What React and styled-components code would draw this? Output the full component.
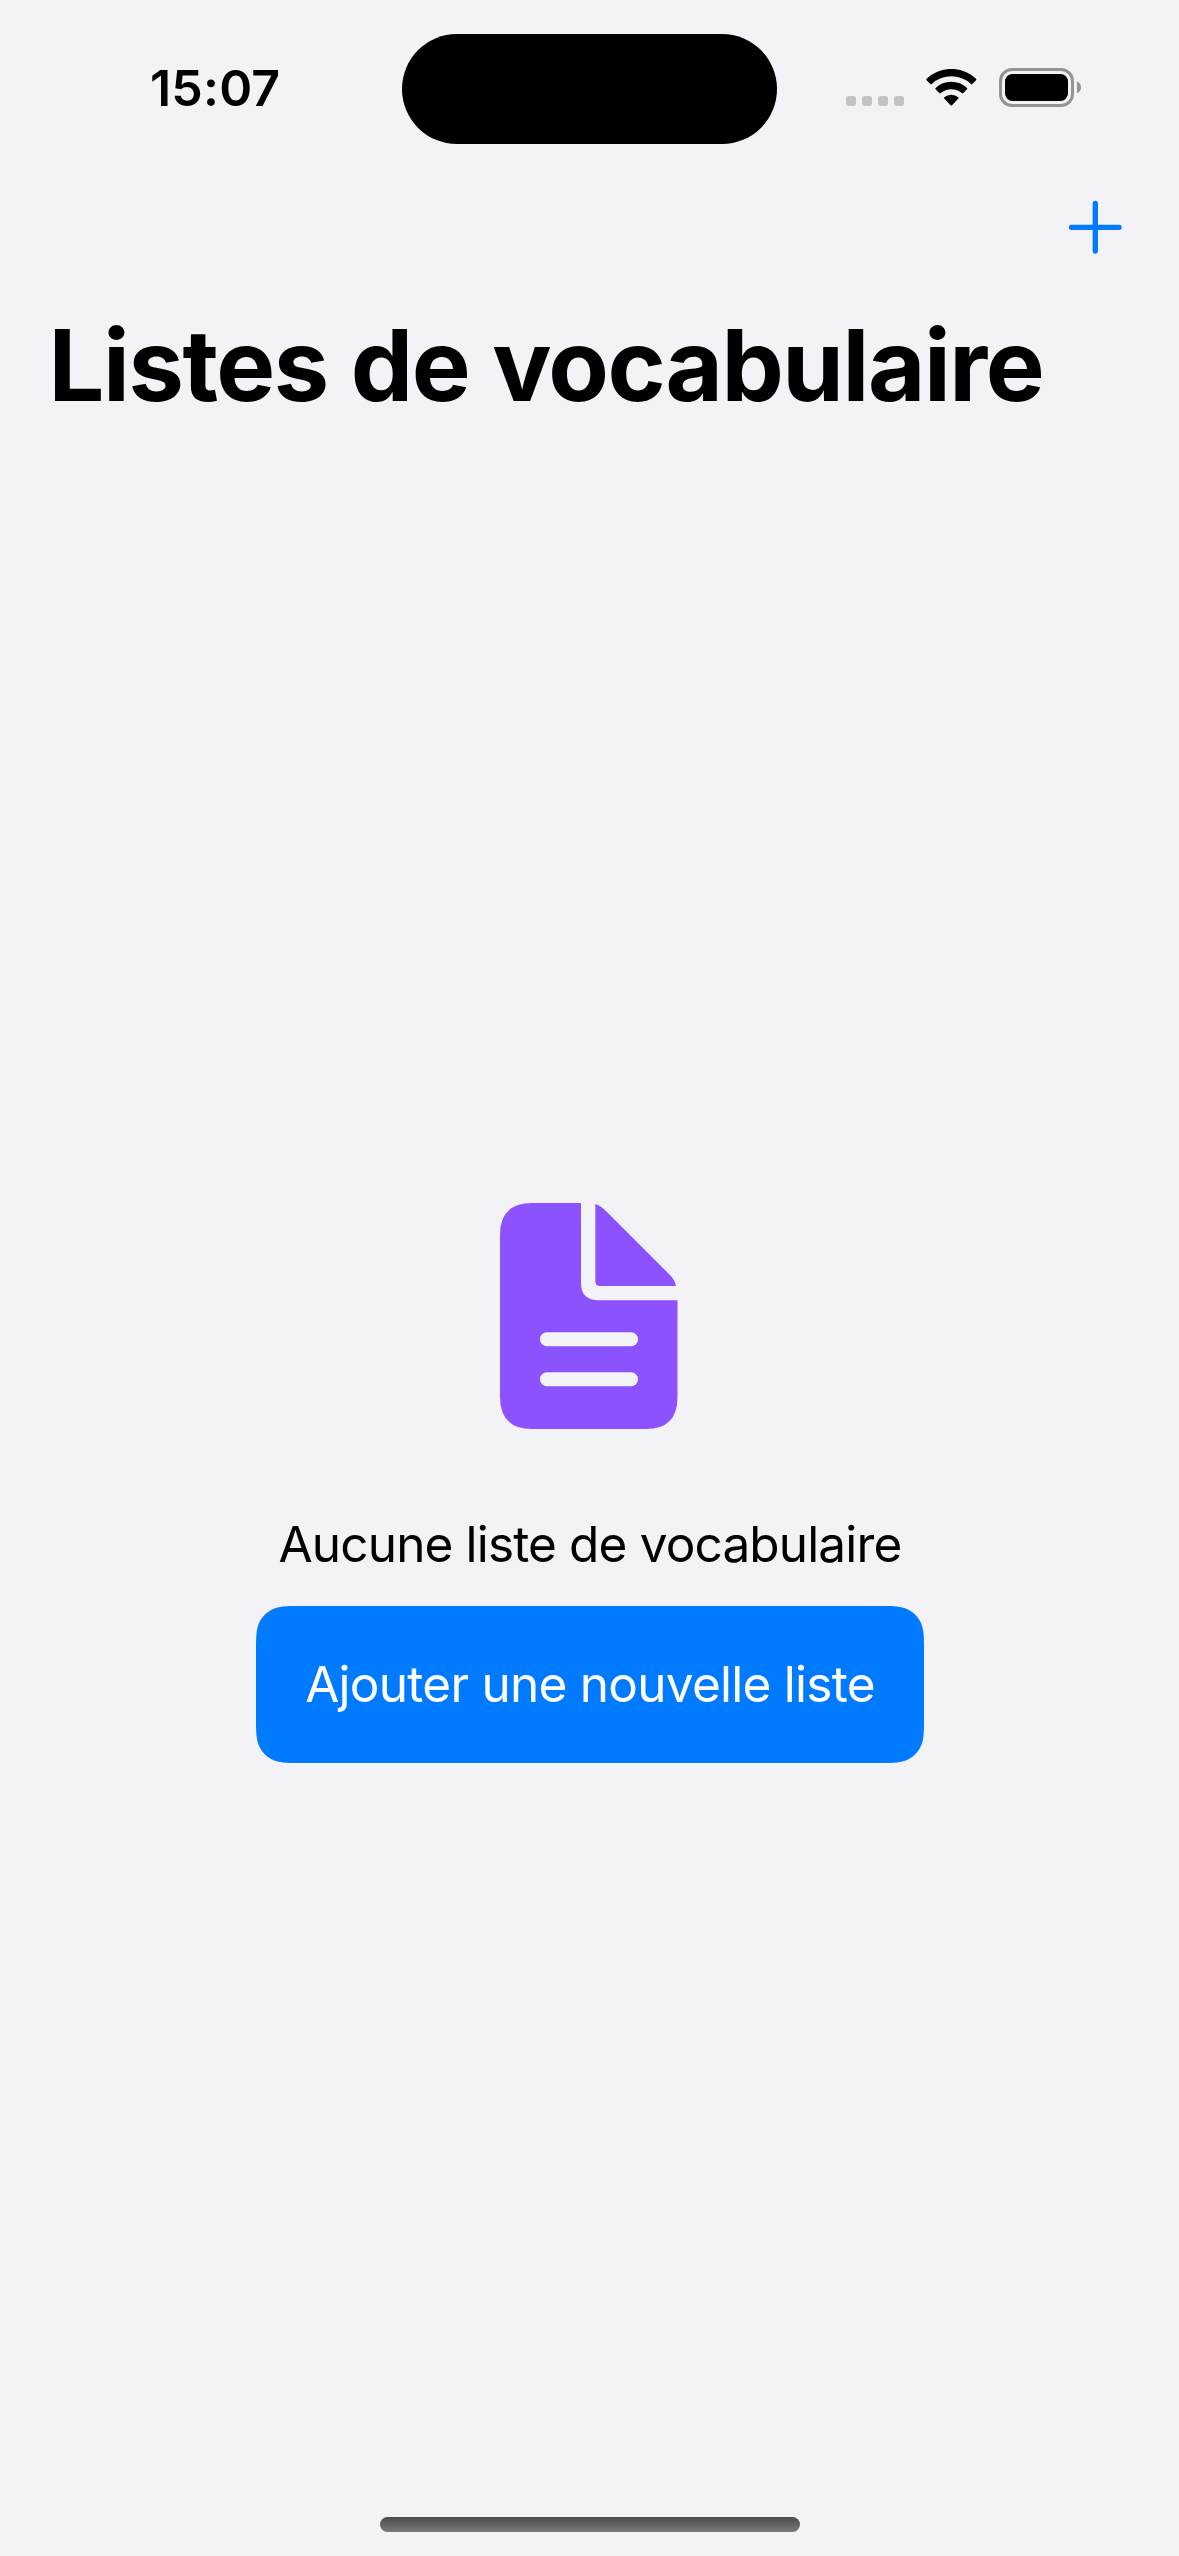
import React from "react";
import styled, { createGlobalStyle } from "styled-components";

const GlobalStyle = createGlobalStyle`
  *, *::before, *::after { box-sizing: border-box; }
  html, body { margin: 0; padding: 0; background: #f2f2f7; }
`;

// Continuous-curvature corners, as iOS draws its rounded rectangles.
const continuousCorners = (w, h, r) => {
  const a = 1.528665 * r, b = 1.08849 * r, c = 0.86841 * r;
  const d = 0.63149 * r, e = 0.07491 * r, f = 0.37282 * r, g = 0.16906 * r;
  return `M${a} 0H${w - a}C${w - b} 0 ${w - c} 0 ${w - d} ${e}C${w - f} ${g} ${w - g} ${f} ${w - e} ${d}C${w} ${c} ${w} ${b} ${w} ${a}V${h - a}C${w} ${h - b} ${w} ${h - c} ${w - e} ${h - d}C${w - g} ${h - f} ${w - f} ${h - g} ${w - d} ${h - e}C${w - c} ${h} ${w - b} ${h} ${w - a} ${h}H${a}C${b} ${h} ${c} ${h} ${d} ${h - e}C${f} ${h - g} ${g} ${h - f} ${e} ${h - d}C0 ${h - c} 0 ${h - b} 0 ${h - a}V${a}C0 ${b} 0 ${c} ${e} ${d}C${g} ${f} ${f} ${g} ${d} ${e}C${c} 0 ${b} 0 ${a} 0Z`;
};

const Screen = styled.div`
  width: 1179px;
  height: 2556px;
  display: flex;
  flex-direction: column;
  overflow: hidden;
  background: #f2f2f7;
  color: #000;
  font-family: Inter, "Liberation Sans", sans-serif;
`;

const StatusBar = styled.header`
  height: 177px;
  flex: none;
  display: grid;
  grid-template-columns: 402px 375px 402px;
  padding-top: 34px;
`;

const Clock = styled.time`
  height: 110px;
  padding-left: 150px;
  font-size: 50px;
  font-weight: 600;
  line-height: 108px;
  letter-spacing: 0.2px;
`;

const Island = styled.div`
  height: 110px;
  border-radius: 55px;
  background: #000;
`;

const Indicators = styled.div`
  height: 110px;
  padding-left: 69px;
  display: flex;
  align-items: flex-start;
`;

const Signal = styled.div`
  display: flex;
  gap: 6px;
  margin: 62px 22px 0 0;
`;

const SignalDot = styled.span`
  width: 10px;
  height: 10px;
  border-radius: 3px;
  background: #c3c2c7;
`;

const WifiIcon = styled.svg`
  width: 51px;
  height: 37px;
  margin: 35px 22px 0 0;
`;

const BatteryIcon = styled.svg`
  width: 83px;
  height: 39px;
  margin-top: 34px;
`;

const NavBar = styled.nav`
  height: 128px;
  flex: none;
  display: flex;
  justify-content: flex-end;
  padding: 23px 56px 0 0;
`;

const AddButton = styled.button`
  width: 55px;
  height: 55px;
  padding: 0;
  border: 0;
  background: none;
  color: #007aff;
`;

const PlusIcon = styled.svg`
  display: block;
  width: 55px;
  height: 55px;
`;

const Title = styled.h1`
  flex: none;
  margin: 0;
  padding-left: 48.5px;
  font-size: 99px;
  font-weight: 700;
  line-height: 120px;
  letter-spacing: -1.45px;
  word-spacing: 1px;
  white-space: nowrap;
`;

const EmptyState = styled.main`
  flex: 1;
  display: flex;
  flex-direction: column;
  align-items: center;
  padding: 778px 0 0 1px;
`;

const DocumentIcon = styled.svg`
  width: 178px;
  height: 226px;
  margin-right: 2px;
  color: #8c52ff;
`;

const Message = styled.p`
  margin: 85px 0 0;
  height: 61px;
  font-size: 49.5px;
  line-height: 61px;
  letter-spacing: -0.85px;
  white-space: nowrap;
`;

const PrimaryButton = styled.button`
  width: 668px;
  height: 157px;
  margin-top: 31px;
  padding: 0;
  border: 0;
  clip-path: path("${continuousCorners(668, 157, 30)}");
  background: #007aff;
  color: #fff;
  font: 400 49.5px/157px Inter, "Liberation Sans", sans-serif;
  letter-spacing: -0.74px;
  white-space: nowrap;
`;

const HomeArea = styled.footer`
  height: 39px;
  flex: none;
  display: flex;
  justify-content: center;
  padding-left: 1px;
`;

const HomeIndicator = styled.div`
  width: 420px;
  height: 15px;
  border-radius: 8px;
  background: linear-gradient(#4b4b4c, #7a7a7c);
`;

export default function App() {
  return (
    <Screen>
      <GlobalStyle />
      <StatusBar>
        <Clock>15:07</Clock>
        <Island />
        <Indicators>
          <Signal>
            <SignalDot />
            <SignalDot />
            <SignalDot />
            <SignalDot />
          </Signal>
          <WifiIcon viewBox="0 0 51 37">
            <path d="M.6 9.800Q11-.1 25.300-.1T50 9.800Q50.700 10.500 50 11.200L46.300 14.900Q45.600 15.600 44.900 14.900 36.500 7.300 25.300 7.300T5.700 14.900Q5 15.600 4.300 14.900L.6 11.200Q-.1 10.500.6 9.800Z" />
            <path d="M9.600 18.900Q16 12.700 25.300 12.700T41 18.900Q41.700 19.600 41 20.300L37.300 24.100Q36.600 24.800 35.900 24.100 31.500 20.200 25.300 20.200T14.700 24.100Q14 24.800 13.300 24.100L9.600 20.300Q8.900 19.600 9.600 18.900Z" />
            <path d="M18.300 28.200Q21.300 25.700 25.300 25.700T32.300 28.200Q33.100 28.900 32.400 29.600L26 36.200Q25.300 36.900 24.600 36.200L18.200 29.600Q17.500 28.900 18.300 28.200Z" />
          </WifiIcon>
          <BatteryIcon viewBox="0 0 83 39">
            <rect x="1.5" y="1.5" width="72" height="36" rx="11.5" fill="none" stroke="#949396" strokeWidth="3" />
            <rect x="6" y="6" width="63" height="27" rx="7.5" />
            <path d="M78 13.300Q82 15.300 82 19.300T78 25.300Z" fill="#949396" />
          </BatteryIcon>
        </Indicators>
      </StatusBar>
      <NavBar>
        <AddButton aria-label="Ajouter">
          <PlusIcon viewBox="0 0 55 55">
            <path d="M3.500 27.300H51.100M27.300 3.500V51.100" fill="none" stroke="currentColor" strokeWidth="5.3" strokeLinecap="round" />
          </PlusIcon>
        </AddButton>
      </NavBar>
      <Title>Listes de vocabulaire</Title>
      <EmptyState>
        <DocumentIcon viewBox="0 0 178 226" fill="currentColor">
          <path
            fillRule="evenodd"
            d="M32 0H81V80Q81 97.300 99 97.300H177.500V194Q177.500 226 146 226H32Q0 226 0 194V32Q0 0 32 0ZM47 129.300A7 7 0 0 0 47 143.300H131A7 7 0 0 0 131 129.300ZM47 169.300A7 7 0 0 0 47 183.300H131A7 7 0 0 0 131 169.300Z"
          />
          <path d="M95.300 1Q100 2 107 9L169.500 71.500Q175 77 176 83H100Q95.300 83 95.300 78Z" />
        </DocumentIcon>
        <Message>Aucune liste de vocabulaire</Message>
        <PrimaryButton>Ajouter une nouvelle liste</PrimaryButton>
      </EmptyState>
      <HomeArea>
        <HomeIndicator />
      </HomeArea>
    </Screen>
  );
}
